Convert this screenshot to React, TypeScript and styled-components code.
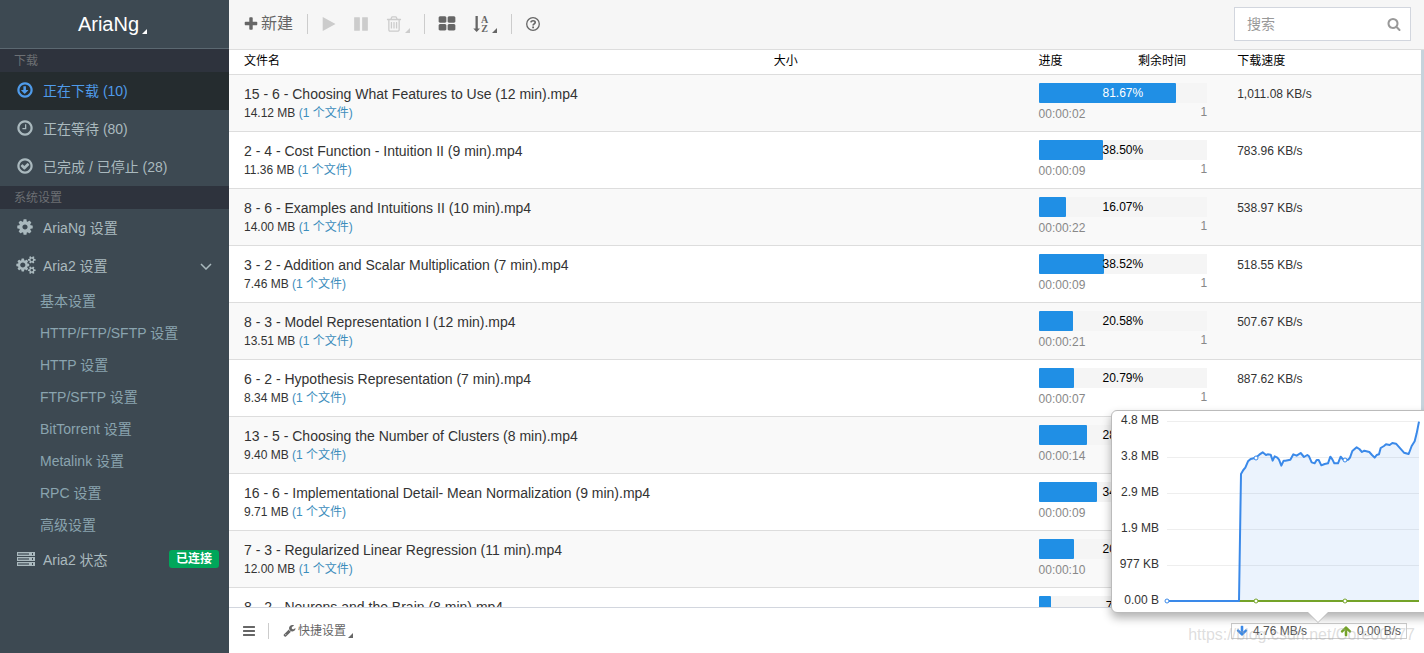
import React from "react";
import styled, { createGlobalStyle, css } from "styled-components";

const GlobalStyle = createGlobalStyle`
  *, *::before, *::after { box-sizing: border-box; }
  body {
    margin: 0;
    font-family: "Liberation Sans", "Noto Sans CJK SC", sans-serif;
    font-size: 12px;
    line-height: 16px;
    color: #333;
    background: #fff;
  }
  button, input { font: inherit; }
`;

const CIRCLE =
  "M896 352q-148 0-273 73t-198 198-73 273 73 273 198 198 273 73 273-73 198-198 73-273-73-273-198-198-273-73zm768 544q0 209-103 385.5t-279.5 279.5-385.5 103-385.5-103-279.5-279.5-103-385.5 103-385.5 279.5-279.5 385.5-103 385.5 103 279.5 279.5 103 385.5z";
const SMALL_COG =
  "v140q0 16-149 31-12 27-30 52 51 113 51 138 0 4-4 7-122 71-124 71-8 0-46-47t-52-68q-20 2-30 2t-30-2q-14 21-52 68t-46 47q-2 0-124-71-4-3-4-7 0-25 51-138-18-25-30-52-149-15-149-31v-140q0-16 149-31 13-29 30-52-51-113-51-138 0-4 4-7 4-2 35-20t59-34 30-16q8 0 46 46.5t52 67.5q20-2 30-2t30 2q51-71 92-112l6-2q4 0 124 70 4 3 4 7 0 25-51 138 17 23 30 52 149 15 149 31z";
const BAR = "v128q0 26-19 45t-45 19h-1408q-26 0-45-19t-19-45v-128q0-26 19-45t45-19h1408q26 0 45 19t19 45z";
const TILE = "v384q0 52-38 90t-90 38h-512q-52 0-90-38t-38-90v-384q0-52 38-90t90-38h512q52 0 90 38t38 90z";
const SLAT = "v576q0 14-9 23t-23 9h-64q-14 0-23-9t-9-23v-576q0-14 9-23t23-9h64q14 0 23 9t9 23z";
const PAUSE = "v1408q0 26-19 45t-45 19h-512q-26 0-45-19t-19-45v-1408q0-26 19-45t45-19h512q26 0 45 19t19 45z";
const SHELF = "M0 0H18V4H0Z M1 1V3H12V1Z M15 1V3H16V1Z";

const icons = {
  down:
    "M1216 928q0 14-10 24l-319 319q-10 9-23 9t-23-9l-320-320q-9-9-9-23 0-13 9.5-22.5t22.5-9.5h192v-352q0-13 9.5-22.5t22.5-9.5h192q13 0 22.5 9.5t9.5 22.5v352h192q14 0 23 9t9 23z" +
    CIRCLE,
  clock:
    "M1024 544v448q0 14-9 23t-23 9h-320q-14 0-23-9t-9-23v-64q0-14 9-23t23-9h224v-352q0-14 9-23t23-9h64q14 0 23 9t9 23z" +
    CIRCLE,
  check:
    "M1299 813l-422 422q-19 19-45 19t-45-19l-294-294q-19-19-19-45t19-45l102-102q19-19 45-19t45 19l147 147 275-275q19-19 45-19t45 19l102 102q19 19 19 45t-19 45z" +
    CIRCLE,
  cog:
    "M1152 896q0-106-75-181t-181-75-181 75-75 181 75 181 181 75 181-75 75-181zm512-109v222q0 12-8 23t-20 13l-185 28q-19 54-39 91 35 50 107 138 10 12 10 25t-9 23q-27 37-99 108t-94 71q-12 0-26-9l-138-108q-44 23-91 38-16 136-29 186-7 28-36 28h-222q-14 0-24.5-8.5t-11.5-21.5l-28-184q-49-16-90-37l-141 107q-10 9-25 9-14 0-25-11-126-114-165-168-7-10-7-23 0-12 8-23 15-21 51-66.5t54-70.5q-27-50-41-99l-183-27q-13-2-21-12.5t-8-23.5v-222q0-12 8-23t19-13l186-28q14-46 39-92-40-57-107-138-10-12-10-24 0-10 9-23 26-36 98.5-107.5t94.5-71.5q13 0 26 10l138 107q44-23 91-38 16-136 29-186 7-28 36-28h222q14 0 24.5 8.5t11.5 21.5l28 184q49 16 90 37l142-107q9-9 24-9 13 0 25 10 129 119 165 170 7 8 7 22 0 12-8 23-15 21-51 66.5t-54 70.5q26 50 41 98l183 28q13 2 21 12.5t8 23.5z",
  cogs:
    "M832 896q0-106-75-181t-181-75-181 75-75 181 75 181 181 75 181-75 75-181zm768 512q0-52-38-90t-90-38-90 38-38 90q0 53 37.5 90.5t90.5 37.5 90.5-37.5 37.5-90.5zm0-1024q0-52-38-90t-90-38-90 38-38 90q0 53 37.5 90.5t90.5 37.5 90.5-37.5 37.5-90.5zm-384 421v185q0 10-7 19.5t-16 10.5l-155 24q-11 35-32 76 34 48 90 115 7 11 7 20 0 12-7 19-23 30-82.5 89.5t-78.5 59.5q-11 0-21-7l-115-90q-37 19-77 31-11 108-23 155-7 24-30 24h-186q-11 0-20-7.5t-10-17.5l-23-153q-34-10-75-31l-118 89q-7 7-20 7-11 0-21-8-144-133-144-160 0-9 7-19 10-14 41-53t47-61q-23-44-35-82l-152-24q-10-1-17-9.5t-7-19.5v-185q0-10 7-19.5t16-10.5l155-24q11-35 32-76-34-48-90-115-7-11-7-20 0-12 7-20 22-30 82-89t79-59q11 0 21 7l115 90q34-18 77-32 11-108 23-154 7-24 30-24h186q11 0 20 7.5t10 17.5l23 153q34 10 75 31l118-89q8-7 20-7 11 0 21 8 144 133 144 160 0 8-7 19-12 16-42 54t-45 60q23 48 34 82l152 23q10 2 17 10.5t7 19.5zM1856 1338" +
    SMALL_COG +
    "M1856 314" +
    SMALL_COG,
  plus:
    "M1600 736v192q0 40-28 68t-68 28h-416v416q0 40-28 68t-68 28h-192q-40 0-68-28t-28-68v-416h-416q-40 0-68-28t-28-68v-192q0-40 28-68t68-28h416v-416q0-40 28-68t68-28h192q40 0 68 28t28 68v416h416q40 0 68 28t28 68z",
  play:
    "M1576 927l-1328 738q-23 13-39.5 3t-16.5-36v-1472q0-26 16.5-36t39.5 3l1328 738q23 13 23 31t-23 31z",
  pause: "M1664 192" + PAUSE + "M768 192" + PAUSE,
  trash:
    "M704 736" + SLAT + "M960 736" + SLAT + "M1216 736" + SLAT +
    "M1344 1460v-948h-896v948q0 22 7 40.5t14.5 27 10.5 8.5h832q3 0 10.5-8.5t14.5-27 7-40.5zm-672-1076h448l-48-117q-7-9-17-11h-317q-10 2-17 11zm928 32v64q0 14-9 23t-23 9h-96v948q0 83-47 143.5t-113 60.5h-832q-66 0-113-58.5t-47-141.5v-952h-96q-14 0-23-9t-9-23v-64q0-14 9-23t23-9h309l70-167q15-37 54-63t79-26h320q40 0 79 26t54 63l70 167h309q14 0 23 9t9 23z",
  tiles: "M832 1024" + TILE + "M832 256" + TILE + "M1728 1024" + TILE + "M1728 256" + TILE,
  search:
    "M1216 832q0-185-131.5-316.5t-316.5-131.5-316.5 131.5-131.5 316.5 131.5 316.5 316.5 131.5 316.5-131.5 131.5-316.5zm512 832q0 52-38 90t-90 38q-54 0-90-38l-343-342q-179 124-399 124-143 0-273.5-55.5t-225-150-150-225-55.5-273.5 55.5-273.5 150-225 225-150 273.5-55.5 273.5 55.5 225 150 150 225 55.5 273.5q0 220-124 399l343 343q37 37 37 90z",
  menu: "M1664 1344" + BAR + "M1664 832" + BAR + "M1664 320" + BAR,
  wrench:
    "M448 1472q0-26-19-45t-45-19-45 19-19 45 19 45 45 19 45-19 19-45zm644-420l-682 682q-37 37-90 37-52 0-91-37l-106-108q-38-36-38-90 0-53 38-91l681-681q39 98 114.5 173.5t173.5 114.5zm634-435q0 39-23 106-47 134-164.5 217.5t-258.5 83.5q-185 0-316.5-131.5t-131.5-316.5 131.5-316.5 316.5-131.5q58 0 121.5 16.5t107.5 46.5q16 11 16 28t-16 28l-293 169v224l193 107q5-3 79-48.5t135.5-81 70.5-35.5q15 0 23.5 10t8.5 25z",
  arrow:
    "M1675 832q0 53-37 90l-651 652q-39 37-91 37-53 0-90-37l-651-652q-38-36-38-90 0-53 38-91l74-75q39-37 91-37 53 0 90 37l294 294v-704q0-52 38-90t90-38h128q52 0 90 38t38 90v704l294-294q37-37 90-37 52 0 91 37l75 75q37 39 37 91z",
};

type IconName = keyof typeof icons;

const RINGED: IconName[] = ["down", "clock", "check"];

const Icon = ({ name, size = 18, flip = false }: { name: IconName; size?: number; flip?: boolean }) => {
  const wide = name === "cogs";
  const w = wide ? 1984 : 1792;
  return (
    <svg
      width={Math.round((size * w) / 1792)}
      height={size}
      viewBox={`${wide ? -96 : 0} 0 ${w} 1792`}
      fill="currentColor"
      fillRule={RINGED.includes(name) ? "evenodd" : "nonzero"}
      aria-hidden="true"
    >
      <path d={icons[name]} transform={flip ? "rotate(180 896 896)" : undefined} />
    </svg>
  );
};

const ServerIcon = () => (
  <svg width="19" height="14" viewBox="-1 0 19 14" fill="currentColor" fillRule="evenodd" aria-hidden="true">
    <path d={SHELF} />
    <path d={SHELF} transform="translate(0 5)" />
    <path d={SHELF} transform="translate(0 10)" />
    <path d="M1 1H12V3H1ZM1 6H12V8H1ZM1 11H12V13H1Z" opacity="0.4" />
  </svg>
);

const SortIcon = () => (
  <svg width="17" height="18" viewBox="0 0 17 18" fill="currentColor" aria-hidden="true">
    <path d="M2.500 1H4.800V13.500H7L3.650 17L.3 13.500H2.500Z" />
    <text x="11.500" y="8" fontFamily="Liberation Serif, serif" fontWeight="700" fontSize="10" textAnchor="middle">A</text>
    <text x="11.500" y="17" fontFamily="Liberation Serif, serif" fontWeight="700" fontSize="10" textAnchor="middle">Z</text>
  </svg>
);

const HelpIcon = () => (
  <svg width="14" height="14" viewBox="0 0 14 14" fill="none" stroke="currentColor" aria-hidden="true">
    <circle cx="7" cy="7" r="6.300" strokeWidth="1.300" />
    <path d="M4.900 5.400C5.100 3.300 9.200 3.100 9.200 5.400C9.200 6.900 7.100 6.800 7.100 8.500" strokeWidth="1.700" />
    <path d="M6.200 10.300H8" strokeWidth="1.700" />
  </svg>
);

const Corner = styled.span<{ $lift?: number }>`
  width: 0;
  height: 0;
  align-self: flex-end;
  margin-bottom: ${(p) => p.$lift ?? 0}px;
  border-bottom: 5px solid currentColor;
  border-left: 5px solid transparent;
`;

/* ---------- frame ---------- */

const Page = styled.div`
  position: relative;
  display: flex;
  height: 100vh;
  overflow: hidden;
`;

const Sidebar = styled.aside`
  flex: 0 0 229px;
  background: #3d4952;
  color: #aab9be;
  font-size: 14px;
`;

const Brand = styled.button`
  display: flex;
  align-items: center;
  justify-content: center;
  gap: 3px;
  width: 100%;
  height: 49px;
  padding: 0 4px 0 0;
  border: 0;
  border-bottom: 1px solid #5b6871;
  background: none;
  color: #fff;
  font-size: 20px;
  line-height: 20px;
`;

const SectionTitle = styled.h2`
  margin: 0;
  padding: 1px 14px 0;
  background: #2e333d;
  color: #6c6f73;
  font-size: 12px;
  font-weight: 400;
  line-height: 22px;
`;

const Menu = styled.ul`
  margin: 0;
  padding: 0;
  list-style: none;
`;

const MenuLink = styled.a<{ $active?: boolean }>`
  display: flex;
  align-items: center;
  height: 38px;
  padding: 0 10px 0 16px;
  color: inherit;
  text-decoration: none;
  ${(p) => p.$active && css`
    background: #252c2f;
    color: #4f9bea;
  `}
`;

const MenuIcon = styled.span`
  display: flex;
  flex: 0 0 27px;
  padding-bottom: 2px;
`;

const MenuText = styled.span`
  flex: 1;
`;

const Chevron = styled.svg`
  margin-right: 7px;
`;

const SubLink = styled.a`
  display: block;
  padding-left: 40px;
  color: #8aa4af;
  line-height: 32px;
  text-decoration: none;
`;

const Badge = styled.span`
  margin-bottom: 2px;
  padding: 0 7px;
  border-radius: 3px;
  background: #00a65a;
  color: #fff;
  font-size: 12px;
  font-weight: 700;
  line-height: 18px;
`;

const Main = styled.main`
  display: flex;
  flex: 1;
  flex-direction: column;
  min-width: 0;
`;

/* ---------- toolbar ---------- */

const Toolbar = styled.header`
  display: flex;
  flex: 0 0 50px;
  align-items: center;
  padding: 0 13px 2px 14px;
  border-bottom: 1px solid #ddd;
  background: #f6f6f6;
  color: #666;
`;

const ToolButton = styled.button<{ $gap?: number }>`
  display: flex;
  align-items: center;
  gap: 2px;
  height: 18px;
  margin-right: ${(p) => p.$gap ?? 12}px;
  padding: 0;
  border: 0;
  background: none;
  color: inherit;
  font-size: 16px;
  line-height: 18px;
  &:disabled { color: #ccc; }
`;

const Divider = styled.span<{ $space?: number }>`
  width: 1px;
  height: 20px;
  margin-right: ${(p) => p.$space ?? 14}px;
  background: #ccc;
`;

const SearchBox = styled.label`
  display: flex;
  align-items: center;
  width: 177px;
  height: 34px;
  margin-left: auto;
  padding: 0 9px 0 12px;
  border: 1px solid #d2d6de;
  background: #fff;
  color: #999;
`;

const SearchInput = styled.input`
  flex: 1;
  min-width: 0;
  padding: 0;
  border: 0;
  outline: 0;
  font-size: 14px;
  &::placeholder { color: #999; opacity: 1; }
`;

/* ---------- task list ---------- */

const Content = styled.section`
  display: flex;
  flex: 1;
  min-height: 0;
  overflow: hidden;
`;

const ScrollTrack = styled.div`
  flex: 0 0 3px;
  background: #c6d3dc;
`;

const TaskTable = styled.table`
  flex: 1;
  width: 100%;
  height: max-content;
  table-layout: fixed;
  border-collapse: separate;
  border-spacing: 0;
`;

const Col = styled.col<{ $share: number }>`
  width: ${(p) => p.$share}%;
`;

const HeadCell = styled.th`
  height: 25px;
  padding: 0 15px 3px;
  border-bottom: 1px solid #ddd;
  color: #000;
  font-weight: 400;
  text-align: left;
`;

const Row = styled.tr`
  &:nth-child(odd) { background: #f9f9f9; }
`;

const Cell = styled.td`
  height: 57px;
  padding: 8px 15px 0;
  border-bottom: 1px solid #ddd;
  vertical-align: top;
`;

const FileName = styled.div`
  overflow: hidden;
  font-size: 14px;
  line-height: 22px;
  white-space: nowrap;
`;

const FileLink = styled.a`
  color: #3c8dbc;
  text-decoration: none;
`;

const ProgressBar = styled.div`
  position: relative;
  height: 20px;
  background: #f5f5f5;
`;

const ProgressFill = styled.div`
  height: 20px;
  border-radius: 1px;
  background: #208fe5;
`;

const ProgressText = styled.span<{ $light: boolean }>`
  position: absolute;
  inset: 0;
  color: ${(p) => (p.$light ? "#fff" : "#000")};
  line-height: 20px;
  text-align: center;
`;

const ProgressInfo = styled.div`
  display: flex;
  justify-content: space-between;
  padding-top: 1px;
  color: #888;
`;

const TimeLeft = styled.span`
  padding-top: 2px;
`;

const Speed = styled.div`
  line-height: 22px;
`;

/* ---------- footer ---------- */

const Footer = styled.footer`
  display: flex;
  position: relative;
  flex: 0 0 46px;
  align-items: center;
  padding: 0 17px 0 13px;
  border-top: 1px solid #d2d6de;
  background: #fff;
  color: #666;
`;

const FooterDivider = styled(Divider)`
  height: 16px;
`;

const FooterButton = styled.button<{ $space?: number }>`
  display: flex;
  align-items: center;
  gap: 2px;
  height: 14px;
  margin-right: ${(p) => p.$space ?? 0}px;
  padding: 0;
  border: 0;
  background: none;
  color: inherit;
  line-height: 14px;
`;

const Stats = styled.div`
  display: flex;
  position: relative;
  justify-content: space-between;
  width: 176px;
  margin-left: auto;
  padding: 0 5px 0 4px;
  border: 1px solid #ccc;
  color: #555;
  line-height: 14px;
`;

const Stat = styled.span<{ $color: string }>`
  display: flex;
  align-items: center;
  gap: 5px;
  svg { color: ${(p) => p.$color}; }
`;

const Popover = styled.div`
  position: absolute;
  bottom: 25px;
  left: 50%;
  width: 414px;
  margin-left: -208px;
  border: 1px solid #bbb;
  border-radius: 6px;
  background: #fff;
  box-shadow: 0 5px 10px rgba(0, 0, 0, 0.3);
  &::after {
    position: absolute;
    bottom: -10px;
    left: 50%;
    margin-left: -10px;
    border: 10px solid transparent;
    border-top-color: #fff;
    border-bottom: 0;
    filter: drop-shadow(0 1px 0 #bbb);
    content: "";
  }
`;

const ChartSvg = styled.svg`
  display: block;
`;

const Watermark = styled.span`
  position: absolute;
  right: 9px;
  bottom: 8px;
  color: rgba(170, 170, 170, 0.4);
  font-size: 16px;
  line-height: 20px;
  pointer-events: none;
`;

/* ---------- data ---------- */

const tasks = [
  ["15 - 6 - Choosing What Features to Use (12 min).mp4", "14.12 MB", 81.67, "00:00:02", "1,011.08 KB/s"],
  ["2 - 4 - Cost Function - Intuition II (9 min).mp4", "11.36 MB", 38.5, "00:00:09", "783.96 KB/s"],
  ["8 - 6 - Examples and Intuitions II (10 min).mp4", "14.00 MB", 16.07, "00:00:22", "538.97 KB/s"],
  ["3 - 2 - Addition and Scalar Multiplication (7 min).mp4", "7.46 MB", 38.52, "00:00:09", "518.55 KB/s"],
  ["8 - 3 - Model Representation I (12 min).mp4", "13.51 MB", 20.58, "00:00:21", "507.67 KB/s"],
  ["6 - 2 - Hypothesis Representation (7 min).mp4", "8.34 MB", 20.79, "00:00:07", "887.62 KB/s"],
  ["13 - 5 - Choosing the Number of Clusters (8 min).mp4", "9.40 MB", 28.72, "00:00:14", "481.12 KB/s"],
  ["16 - 6 - Implementational Detail- Mean Normalization (9 min).mp4", "9.71 MB", 34.5, "00:00:09", "702.30 KB/s"],
  ["7 - 3 - Regularized Linear Regression (11 min).mp4", "12.00 MB", 20.83, "00:00:10", "940.51 KB/s"],
  ["8 - 2 - Neurons and the Brain (8 min).mp4", "9.80 MB", 7.14, "00:00:21", "443.87 KB/s"],
] as [string, string, number, string, string][];

const aria2Settings = [
  "基本设置", "HTTP/FTP/SFTP 设置", "HTTP 设置", "FTP/SFTP 设置",
  "BitTorrent 设置", "Metalink 设置", "RPC 设置", "高级设置",
];

const ticks = ["4.8 MB", "3.8 MB", "2.9 MB", "1.9 MB", "977 KB", "0.00 B"];

/* Download samples: thirds of a pixel across and above the zero line. */
const samples: [number, number][] = [
  [0, 0], [216, 0], [222, 381], [229, 393], [235, 400], [243, 419], [251, 426], [266, 430], [277, 439],
  [287, 446], [297, 438], [302, 440], [311, 439], [317, 421], [323, 434], [331, 430], [336, 424], [343, 406],
  [350, 421], [355, 421], [370, 424], [379, 440], [389, 436], [401, 444], [411, 432], [421, 438], [426, 434],
  [434, 416], [443, 413], [449, 423], [455, 423], [463, 407], [473, 411], [483, 413], [490, 433], [496, 425],
  [502, 413], [513, 413], [521, 433], [527, 426], [533, 424], [544, 424], [549, 430], [556, 450], [569, 461],
  [577, 456], [585, 447], [592, 451], [607, 447], [615, 438], [623, 430], [629, 438], [636, 440], [641, 459],
  [651, 465], [657, 470], [668, 468], [676, 474], [687, 472], [695, 463], [703, 454], [711, 445], [725, 441],
  [734, 465], [743, 479], [749, 503], [756, 538],
];

const linePath = samples.map(([x, y], i) => `${i ? "L" : "M"}${55 + x / 3} ${190 - y / 3}`).join("");

const Chart = () => (
  <ChartSvg width="312" height="201" viewBox="0 0 312 201" role="img" aria-label="4.76 MB/s">
    {ticks.map((t, i) => (
      <g key={t}>
        <line x1="55" x2="307" y1={10.5 + i * 36} y2={10.5 + i * 36} stroke="#eee" />
        <text x="47" y={13 + i * 36} textAnchor="end" fontSize="12" fill="#333">{t}</text>
      </g>
    ))}
    <path d={`${linePath}V190Z`} fill="#3a89e9" fillOpacity="0.1" />
    <line x1="55" x2="307" y1="190" y2="190" stroke="#74a329" strokeWidth="2" />
    <path d={linePath} fill="none" stroke="#3a89e9" strokeWidth="2" strokeLinejoin="round" />
    {[[55, 190, "#3a89e9"], [144, 190, "#74a329"], [233, 190, "#74a329"], [144, 47, "#3a89e9"], [233, 49, "#3a89e9"]].map(
      ([x, y, c], i) => <circle key={i} cx={x} cy={y} r="2" fill="#fff" stroke={String(c)} />
    )}
  </ChartSvg>
);

export default function App() {
  return (
    <>
      <GlobalStyle />
      <Page>
        <Sidebar>
          <Brand>AriaNg <Corner $lift={14} /></Brand>
          <nav>
            <SectionTitle>下载</SectionTitle>
            <Menu>
              <li><MenuLink href="#downloading" $active><MenuIcon><Icon name="down" /></MenuIcon><MenuText>正在下载 (10)</MenuText></MenuLink></li>
              <li><MenuLink href="#waiting"><MenuIcon><Icon name="clock" /></MenuIcon><MenuText>正在等待 (80)</MenuText></MenuLink></li>
              <li><MenuLink href="#stopped"><MenuIcon><Icon name="check" /></MenuIcon><MenuText>已完成 / 已停止 (28)</MenuText></MenuLink></li>
            </Menu>
            <SectionTitle>系统设置</SectionTitle>
            <Menu>
              <li><MenuLink href="#ariang"><MenuIcon><Icon name="cog" /></MenuIcon><MenuText>AriaNg 设置</MenuText></MenuLink></li>
              <li>
                <MenuLink href="#aria2">
                  <MenuIcon><Icon name="cogs" /></MenuIcon>
                  <MenuText>Aria2 设置</MenuText>
                  <Chevron width="12" height="8" viewBox="0 0 12 8" fill="none" stroke="currentColor" strokeWidth="1.500"><path d="M1 2L6 7L11 2" /></Chevron>
                </MenuLink>
                <Menu>
                  {aria2Settings.map((s) => <li key={s}><SubLink href="#settings">{s}</SubLink></li>)}
                </Menu>
              </li>
              <li><MenuLink href="#status"><MenuIcon><ServerIcon /></MenuIcon><MenuText>Aria2 状态</MenuText><Badge>已连接</Badge></MenuLink></li>
            </Menu>
          </nav>
        </Sidebar>
        <Main>
          <Toolbar>
            <ToolButton $gap={14}><Icon name="plus" size={16} />新建</ToolButton>
            <Divider $space={13} />
            <ToolButton disabled aria-label="开始" $gap={16}><Icon name="play" size={16} /></ToolButton>
            <ToolButton disabled aria-label="暂停" $gap={16}><Icon name="pause" size={16} /></ToolButton>
            <ToolButton disabled aria-label="删除" $gap={14}><Icon name="trash" size={18} /><Corner /></ToolButton>
            <Divider $space={13} />
            <ToolButton aria-label="显示" $gap={17}><Icon name="tiles" /></ToolButton>
            <ToolButton aria-label="排序" $gap={14}><SortIcon /><Corner /></ToolButton>
            <Divider />
            <ToolButton aria-label="帮助"><HelpIcon /></ToolButton>
            <SearchBox>
              <SearchInput type="text" placeholder="搜索" aria-label="搜索" />
              <Icon name="search" size={14} />
            </SearchBox>
          </Toolbar>
          <Content>
            <TaskTable>
              <colgroup>
                <Col $share={44.44} /><Col $share={22.22} /><Col $share={8.33} /><Col $share={8.33} /><Col $share={16.68} />
              </colgroup>
              <thead>
                <tr>
                  <HeadCell>文件名</HeadCell><HeadCell>大小</HeadCell><HeadCell>进度</HeadCell><HeadCell>剩余时间</HeadCell><HeadCell>下载速度</HeadCell>
                </tr>
              </thead>
              <tbody>
                {tasks.map(([name, size, pct, left, speed]) => (
                  <Row key={name}>
                    <Cell colSpan={2}>
                      <FileName>{name}</FileName>
                      {size} <FileLink href="#files">(1 个文件)</FileLink>
                    </Cell>
                    <Cell colSpan={2}>
                      <ProgressBar>
                        <ProgressFill style={{ width: `${pct}%` }} />
                        <ProgressText $light={pct > 50}>{pct.toFixed(2)}%</ProgressText>
                      </ProgressBar>
                      <ProgressInfo><TimeLeft>{left}</TimeLeft><span>1</span></ProgressInfo>
                    </Cell>
                    <Cell><Speed>{speed}</Speed></Cell>
                  </Row>
                ))}
              </tbody>
            </TaskTable>
            <ScrollTrack />
          </Content>
          <Footer>
            <FooterButton aria-label="菜单" $space={12}><Icon name="menu" size={14} /></FooterButton>
            <FooterDivider />
            <FooterButton><Icon name="wrench" size={13} />快捷设置<Corner /></FooterButton>
            <Stats>
              <Stat $color="#3a89e9"><Icon name="arrow" size={12} />4.76 MB/s</Stat>
              <Stat $color="#74a329"><Icon name="arrow" size={12} flip />0.00 B/s</Stat>
              <Popover><Chart /></Popover>
            </Stats>
          </Footer>
        </Main>
        <Watermark>https://blog.csdn.net/Core00077</Watermark>
      </Page>
    </>
  );
}
